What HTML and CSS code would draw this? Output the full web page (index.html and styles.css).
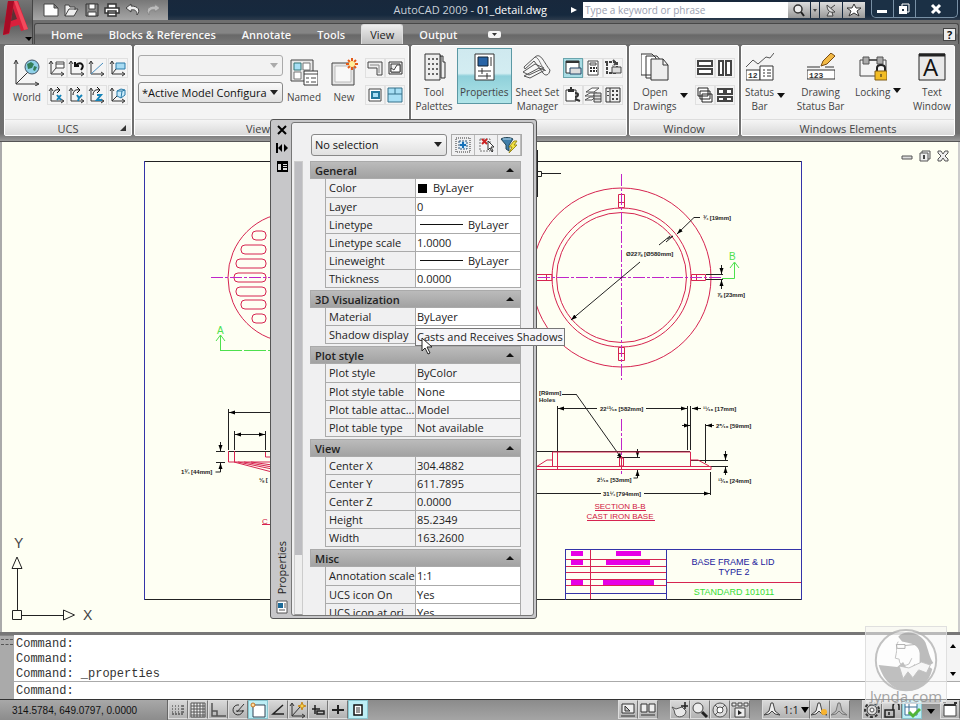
FILE: index.html
```html
<!DOCTYPE html>
<html lang="en">
<head>
<meta charset="utf-8">
<title>AutoCAD 2009 - 01_detail.dwg</title>
<link rel="stylesheet" href="styles.css">
</head>
<body>
<svg class="defs" width="0" height="0" aria-hidden="true">
  <defs>
    <symbol id="axes" viewBox="0 0 18 18"><path d="M3 3v12h12M1 5l2-3 2 3M13 13l3 2-3 2" fill="none" stroke="#333"/></symbol>
    <marker id="arrow" viewBox="0 0 6 6" refX="6" refY="3" markerWidth="6" markerHeight="6" orient="auto-start-reverse" markerUnits="userSpaceOnUse"><path d="M0 1l6 2-6 2z"/></marker>
  </defs>
</svg>

<header class="top">
  <button class="app-button" aria-label="Application menu">
    <svg viewBox="0 0 33 43"><path d="M8 0h10l10 28-7 2-2-6-8 2-2 7-6 1z" fill="#d9203c"/><path d="M8 0h6L9 32l-6 2z" fill="#a60c25"/><path d="M13 7l4 11-6 2z" fill="#5d3034"/><path d="M17 0l11 28-4 1L14 0z" fill="#f24a5c"/><path d="M25 36h7l-3 4z" fill="#000"/></svg>
  </button>
  <div class="titlebar">
    <div class="quick">
      <button aria-label="New"><svg viewBox="0 0 16 14"><path d="M1 1h10l4 4v8H1zM11 1v4h4" fill="#fff" stroke="#444"/></svg></button>
      <button aria-label="Open"><svg viewBox="0 0 16 14"><path d="M2 13V2h4l1 2h5v3M2 13l4-7h9l-4 7z" fill="#eee" stroke="#444"/></svg></button>
      <button aria-label="Save"><svg viewBox="0 0 16 14"><path d="M2 1h12v12H2z" fill="#888" stroke="#333"/><path d="M5 1h6v5H5zM4 9h8v4H4z" fill="#fff" stroke="#444"/></svg></button>
      <button aria-label="Print"><svg viewBox="0 0 16 14"><path d="M4 1h8v4H4zM1 5h14v5H1zM4 8h8v5H4z" fill="#fff" stroke="#333" stroke-width="1.5"/></svg></button>
      <button aria-label="Undo"><svg viewBox="0 0 16 14"><path d="M6 1L1 5l5 4V7c4-1 6 1 6 5 4-5 1-9-6-9z" fill="#eee" stroke="#444"/></svg></button>
      <button aria-label="Redo"><svg viewBox="0 0 16 14"><path d="M10 1l5 4-5 4V7c-4-1-6 1-6 5-4-5-1-9 6-9z" fill="#bbb" stroke="#888"/></svg></button>
    </div>
    <h1 class="title">AutoCAD 2009 - <span>01_detail.dwg</span></h1>
    <svg class="title-arrow" viewBox="0 0 6 8"><path d="M0 1l6 3-6 3z" fill="#fff"/></svg>
    <input class="search" type="search" aria-label="Search help" placeholder="Type a keyword or phrase">
    <div class="info">
      <button aria-label="Search"><svg viewBox="0 0 16 14"><circle cx="7" cy="6" r="4" fill="#eee" stroke="#333" stroke-width="1.5"/><path d="M10 9l3 4" stroke="#222" stroke-width="2"/></svg></button>
      <button class="slim" aria-label="Search options"><svg viewBox="0 0 6 14"><path d="M1 6h4l-2 3z" fill="#444"/></svg></button>
      <button aria-label="Communication center"><svg viewBox="0 0 16 14"><path d="M4 2c0 6 3 8 8 7zM6 9l-2 4h6L9 9M8 5l4-3" fill="#ddd" stroke="#444"/></svg></button>
      <button aria-label="Favorites"><svg viewBox="0 0 16 14"><path d="M8 1l2 4h5l-4 3 2 5-5-3-5 3 2-5-4-3h5z" fill="#fff" stroke="#333"/></svg></button>
    </div>
    <div class="window-controls">
      <button aria-label="Minimize"><svg viewBox="0 0 14 12"><path d="M2 7h10v3H2z" fill="#fff"/></svg></button>
      <button aria-label="Restore"><svg viewBox="0 0 14 12"><path d="M5 1h7v8H5z" fill="none" stroke="#fff"/><path d="M2 3h8v8H2z" fill="#fff"/><path d="M5 6h2v2H5z" fill="#234"/></svg></button>
      <button class="wide" aria-label="Close"><svg viewBox="0 0 14 12"><path d="M3 2l8 8M11 2l-8 8" stroke="#fff" stroke-width="3"/></svg></button>
    </div>
  </div>
  <nav class="tabs">
    <a href="#home">Home</a><a href="#blocks">Blocks &amp; References</a><a href="#annotate">Annotate</a><a href="#tools">Tools</a><a class="active" href="#view">View</a><a href="#output">Output</a>
    <button class="collapse" aria-label="Minimize ribbon"><svg viewBox="0 0 13 7"><rect width="13" height="7" rx="2" fill="#f4f4f4"/><path d="M4 2h5L6.500 5z" fill="#333"/></svg></button>
    <button class="help" aria-label="Help">?</button>
  </nav>
</header>

<main class="ribbon">
  <section class="panel ucs">
    <div class="tools">
      <button class="big low"><svg viewBox="0 0 28 28"><path d="M3 3v23h22M1 6l2-4 2 4M22 24l4 2-4 2M3 26L16 13" fill="none" stroke="#333"/><circle cx="19" cy="9" r="7" fill="#8fd0e8" stroke="#456"/><path d="M14 6l4-2 3 2-2 4-4 1zM21 8l3 1-2 4-2-1z" fill="#337f58"/></svg>World</button>
      <div class="grid three">
        <button aria-label="Named UCS"><svg viewBox="0 0 18 18"><use href="#axes"/><path d="M8 3h8v6H8zM8 5h8" fill="#fff" stroke="#444"/><path d="M3 15l5-6" stroke="#444"/></svg></button>
        <button aria-label="UCS previous"><svg viewBox="0 0 18 18"><use href="#axes"/><path class="heavy" d="M8 6c5-4 9 0 5 5M7 3v4h4" fill="none" stroke="#111"/></svg></button>
        <button aria-label="UCS origin"><svg viewBox="0 0 18 18"><use href="#axes"/><path d="M3 15L15 4" stroke="#4a8fc0"/></svg></button>
        <button aria-label="UCS X"><svg viewBox="0 0 18 18"><use href="#axes"/><path d="M5 9c0-4 3-6 6-5M9 1l3 3-3 3" fill="none" stroke="#111"/><path class="heavy" d="M9 9l4 5M13 9l-4 5" stroke="#1684b8"/></svg></button>
        <button aria-label="UCS Y"><svg viewBox="0 0 18 18"><use href="#axes"/><path d="M5 9c0-4 3-6 6-5M9 1l3 3-3 3" fill="none" stroke="#111"/><path class="heavy" d="M9 9l2 3 3-3M11 12l-1 3" fill="none" stroke="#1684b8"/></svg></button>
        <button aria-label="UCS Z"><svg viewBox="0 0 18 18"><use href="#axes"/><path d="M5 9c0-4 3-6 6-5M9 1l3 3-3 3" fill="none" stroke="#111"/><path class="heavy" d="M9 9h4l-4 5h5" fill="none" stroke="#1684b8"/></svg></button>
      </div>
      <div class="grid one">
        <button aria-label="View UCS"><svg viewBox="0 0 18 18"><use href="#axes"/><path d="M7 4h9v6H7z" fill="#a8dcf3" stroke="#2b7ba8"/><path d="M3 15l4-5" stroke="#333"/></svg></button>
        <button aria-label="Object UCS"><svg viewBox="0 0 18 18"><use href="#axes"/><path d="M8 5l4-2 4 1v5l-4 3-4-2zM8 5h5l3-1M13 5l-1 7" fill="#c8eafa" stroke="#2b7ba8"/><path d="M3 15l5-5" stroke="#333"/></svg></button>
      </div>
    </div>
    <h2>UCS<svg class="corner" viewBox="0 0 6 6"><path d="M6 0v6H0z" fill="#333"/></svg></h2>
  </section>
  <section class="panel view">
    <div class="tools">
      <div class="stack">
        <span class="combo disabled"><select aria-label="Named view" disabled><option></option></select></span>
        <span class="combo"><select aria-label="Viewport configuration"><option>*Active Model Configura</option></select></span>
      </div>
      <button class="big low"><svg viewBox="0 0 28 28"><path d="M1 2h22v21H1z" fill="#e8e8e8" stroke="#444"/><path d="M4 5h7v7H4z" fill="#a7dff5" stroke="#377"/><path d="M13 5h7v7h-7zM4 14h7v7H4z" fill="#fff" stroke="#777"/><path d="M14 13h14v14H14z" fill="#fff" stroke="#333"/><path d="M14 16h14M16 20h3M21 20h5M16 24h3M21 24h5" stroke="#444"/></svg>Named</button>
      <button class="big low"><svg viewBox="0 0 28 28"><path d="M2 5h22v22H2z" fill="#e6e6e6" stroke="#444"/><path d="M5 8h16v16H5z" fill="#f8f8f8" stroke="#bbb"/><path d="M22 0v12M16 6h12M18 2l8 8M26 2l-8 8" stroke="#e45a16" stroke-width="2"/><circle cx="22" cy="6" r="3" fill="#ffef99"/></svg>New</button>
      <div class="grid two">
        <button aria-label="Polygonal viewport"><svg viewBox="0 0 18 18"><path d="M2 3h14v13h-5V9H2z" fill="#eee" stroke="#444"/><path d="M4 6h9v8" fill="none" stroke="#888"/></svg></button>
        <button aria-label="Clip viewport"><svg viewBox="0 0 18 18"><path d="M3 3h13v12H3zM5 5h9v8H5z" fill="#eee" stroke="#333"/><path d="M5 13V9l3 2 3-5h3v7z" fill="#fff" stroke="#444"/></svg></button>
        <button aria-label="Viewport object"><svg viewBox="0 0 18 18"><path d="M3 3h12v12H3z" fill="#fff" stroke="#444"/><path class="heavy" d="M6 6h7v6H6z" fill="#a7dff5" stroke="#247a9d"/></svg></button>
        <button aria-label="Join viewports"><svg viewBox="0 0 18 18"><path d="M2 2h14v14H2zM9 2v6M2 8h14" fill="#a7dff5" stroke="#35708a"/></svg></button>
      </div>
    </div>
    <h2>Viewports</h2>
  </section>
  <section class="panel palettes">
    <div class="tools">
      <button class="big"><svg viewBox="0 0 28 28"><path d="M20 3h3v6h2v16h-4V3zM5 1h15v26H5z" fill="#eee" stroke="#333"/><path d="M8 5h2v2H8zm4 0h2v2h-2zm4 0h2v2h-2zM8 10h2v2H8zm4 0h2v2h-2zm4 0h2v2h-2zM8 15h2v2H8zm4 0h2v2h-2zm4 0h2v2h-2zM8 20h2v2H8zm4 0h2v2h-2zm4 0h2v2h-2z" fill="#666"/></svg>Tool<br>Palettes</button>
      <button class="big selected"><svg viewBox="0 0 28 28"><path d="M5 1h19v26H5z" fill="#fff" stroke="#333"/><path d="M8 4h10v9H8z" fill="#2864a6" stroke="#123"/><path d="M21 4v9M8 18h13M12 15v6M8 23h13M17 20v6" stroke="#333"/></svg>Properties</button>
      <button class="big"><svg viewBox="0 0 28 28"><path d="M1 23l15-8 6 2-15 8zM0 19l12-8 9 4-15 7zM1 14L12 4c6-5 9 6 15 13-1 6-5 6-7 3l-9-12L2 16z" fill="#f7f7f7" stroke="#555"/><path d="M12 4c5 1 5 9 11 14" fill="none" stroke="#777"/></svg>Sheet Set<br>Manager</button>
      <div class="grid three">
        <button class="lit" aria-label="Command line"><svg viewBox="0 0 18 18"><path d="M2 2h13v12H2z" fill="#fff" stroke="#333"/><path class="heavy" d="M2 3h13" stroke="#333"/><path d="M6 9h11v6H6z" fill="#ddd" stroke="#246"/></svg></button>
        <button aria-label="Calculator"><svg viewBox="0 0 18 18"><path d="M4 2h10v14H4zM6 4h6v2H6z" fill="#fff" stroke="#444"/><path class="heavy" d="M6 9h2m1 0h2m1 0h1M6 12h2m1 0h2m1 0h1" stroke="#333"/></svg></button>
        <button aria-label="Design center"><svg viewBox="0 0 18 18"><path class="heavy" d="M1 3h12v11H3V4M9 1l3 3-3 3" fill="none" stroke="#444" stroke-dasharray="3 1"/><path d="M8 8h9v6H8z" fill="#ddd" stroke="#444"/></svg></button>
        <button aria-label="Markup manager"><svg viewBox="0 0 18 18"><path d="M2 4h10v11H2z" fill="#fff" stroke="#333"/><path class="heavy" d="M7 1v4M11 7c5 0 3 4 0 4M11 13l5 2" fill="none" stroke="#333"/><path d="M4 3h6v3H4z" fill="#333"/></svg></button>
        <button aria-label="Database"><svg viewBox="0 0 18 18"><path d="M2 6l6-4h7l-5 4zM1 10l5-3h7l-4 3zM1 14l5-3h5l-3 3z" fill="#fff" stroke="#555"/><path d="M10 7h7v9h-7zM10 10h7M10 13h7" fill="#ddd" stroke="#444"/></svg></button>
        <button aria-label="External references"><svg viewBox="0 0 18 18"><path d="M2 2h14v14H2zM6 2v14" fill="#eee" stroke="#333"/><path d="M8 4h2v2H8zm4 0h2v2h-2zM8 8h2v2H8zm4 0h2v2h-2zM8 12h2v2H8zm4 0h2v2h-2zM3 5h2v1H3zm0 4h2v1H3z" fill="#444"/></svg></button>
      </div>
    </div>
    <h2>Palettes</h2>
  </section>
  <section class="panel window">
    <div class="tools">
      <button class="big drop"><svg viewBox="0 0 28 28"><path d="M0 1h11l4 4v17H0zM5 3h11l4 5v17H5z" fill="#fff" stroke="#333"/><path d="M10 6h12l5 6v15H10zM22 6v6h5" fill="#eee" stroke="#333"/></svg>Open<br>Drawings</button>
      <div class="grid two">
        <button aria-label="Tile horizontally"><svg viewBox="0 0 18 18"><path class="heavy" d="M2 2h14v5H2zM2 10h14v5H2z" fill="#fff" stroke="#444"/></svg></button>
        <button aria-label="Tile vertically"><svg viewBox="0 0 18 18"><path class="heavy" d="M3 2h4v14H3zM10 2h5v14h-5z" fill="#fff" stroke="#444"/></svg></button>
        <button aria-label="Cascade"><svg viewBox="0 0 18 18"><path d="M2 2h10v8H2zM4 5h10v8H4zM6 8h10v8H6z" fill="#fff" stroke="#222"/></svg></button>
        <button aria-label="Arrange icons"><svg viewBox="0 0 18 18"><path class="heavy" d="M2 3h6v5H2zM10 3h6v5h-6zM2 11h6v4H2zM10 11h6v4h-6z" fill="#fff" stroke="#444"/></svg></button>
      </div>
    </div>
    <h2>Window</h2>
  </section>
  <section class="panel elements">
    <div class="tools">
      <button class="big drop"><svg viewBox="0 0 28 28"><path d="M0 14l7-7 5 4 8-7 4 1 4-5" fill="none" stroke="#555"/><path d="M0 17h14v10H0z" fill="#fff" stroke="#333"/><text class="tiny" x="2" y="25">12</text><path d="M14 13h13v14H14z" fill="#fff" stroke="#333"/><path d="M17 17h2m2 0h4m-8 3h2m2 0h4m-8 3h2m2 0h4" stroke="#333"/></svg>Status<br>Bar</button>
      <button class="big"><svg viewBox="0 0 28 28"><path d="M0 14h13M18 14h9" stroke="#333"/><path d="M0 17h28v9H0z" fill="#fff" stroke="#333"/><text class="tiny" x="2" y="25">123</text><path d="M14 13l2-5 8-8 4 3-8 8z" fill="#f2b945" stroke="#774b13"/></svg>Drawing<br>Status Bar</button>
      <button class="big drop side"><svg viewBox="0 0 28 28"><path d="M1 7h26v16H1z" fill="#f4f4f4" stroke="#444"/><path d="M4 4h6v7H4zM18 4h6v7h-6z" fill="#aaa" stroke="#555"/><path d="M10 7h8" stroke="#222"/><path d="M18 18v-3c0-4 8-4 8 0v3" fill="none" stroke="#222" stroke-width="2"/><path d="M16 18h12v9H16z" fill="#f2bd25" stroke="#805d16"/><path d="M22 21v3" stroke="#222"/></svg>Locking</button>
      <button class="big"><svg viewBox="0 0 28 28"><path d="M1 1h26v26H1z" fill="#e9e9e9" stroke="#222"/><path d="M1 2h26" stroke="#222" stroke-width="3"/><text class="letter" x="5" y="23">A</text></svg>Text<br>Window</button>
    </div>
    <h2>Windows Elements</h2>
  </section>
</main>

<section class="canvas" aria-label="Drawing">
  <svg class="drawing" viewBox="2 142 956 490" preserveAspectRatio="xMidYMid meet">
    <g class="ink crisp"><path d="M145 161.500H801M145 599.500H801"/><path class="blue" d="M144.500 161V600M801.500 161V600"/></g>
    <!-- lid, plan -->
    <g class="red"><circle cx="293" cy="277.500" r="65"/>
      <rect x="252" y="231" width="14" height="9" rx="4"/><rect x="241" y="245" width="25" height="9" rx="4"/><rect x="236" y="259" width="30" height="9" rx="4"/><rect x="234" y="273" width="32" height="9" rx="4"/><rect x="236" y="287" width="30" height="9" rx="4"/><rect x="241" y="300" width="25" height="9" rx="4"/><rect x="252" y="314" width="14" height="9" rx="4"/></g>
    <path class="center" d="M211 277.500H272"/>
    <g class="green"><path d="M220.500 351V335M216 341l4.500-6 4.500 6M220 350.500H272" stroke-dasharray="22 2"/><text x="217" y="334">A</text></g>
    <!-- lid, section -->
    <g class="ink"><path d="M228.500 409V450M234.500 431V450M265.500 431V450M228 451.500H272M216 451.500h9M216 462.500h9M220.500 462v10h-5"/><path d="M272 412.500H229" marker-end="url(#arrow)"/><path d="M235 434.500H265" marker-start="url(#arrow)" marker-end="url(#arrow)"/><path d="M220.500 442V451" marker-end="url(#arrow)"/><path d="M220.500 471V463" marker-end="url(#arrow)"/></g>
    <g class="red"><path d="M228.500 451v11H272M234.500 451v11M265.500 452v5h6M234 462l38 10M238 462l34 7M244 462l28 5M251 462l21 3"/></g>
    <text class="dim" x="181" y="474">1¾ [44mm]</text><text class="dim" x="259" y="482">⅛ [</text>
    <text class="caption" x="262" y="524">C</text><path class="red" d="M262 524.500h10"/>
    <!-- base, plan -->
    <g class="red"><circle cx="621.500" cy="277.500" r="89.500"/><circle cx="621.500" cy="277.500" r="69.500"/><circle cx="621.500" cy="277.500" r="65"/>
      <path d="M618.500 194.500h6v13h-6zM618.500 347.500h6v13h-6zM536 274.500h16v6h-16zM691.500 274.500h14v6h-14zM546.500 274v6M696.500 274v6M618 202.500h7M618 353.500h7"/></g>
    <path class="center" d="M621.500 174V380M621.500 419V474M538 277.500H722"/>
    <g class="ink"><path d="M537.500 150V197M538 171.500h3.500v5H538M541 173.500H561M706 274.500H723M706 279.500H723M659 245l11-9M667 239l6-3M666 242l7-6"/><path d="M700 217.500h-6L677 234" marker-end="url(#arrow)"/><path d="M640 262L571 320" marker-end="url(#arrow)"/><path d="M721.500 265V274" marker-end="url(#arrow)"/><path d="M721.500 289V280" marker-end="url(#arrow)"/></g>
    <g class="green"><path d="M722 278.500H734.500V263M730 268l4.500-6 4.500 6"/><text x="729" y="260">B</text></g>
    <text class="dim" x="703" y="220">¾ [19mm]</text><text class="dim" x="626" y="256">Ø22⅞ [Ø580mm]</text><text class="dim" x="717" y="297">⅞ [23mm]</text>
    <!-- base, section -->
    <g class="ink"><path d="M557.500 406V451M687.500 406V450M690.500 406V450M536 451.500H690M705.500 424V463M617 457.500H640M624 469.500H640M691 460.500H728M698 466.500H728M710.500 472V495M637.500 478h-4M562 394.500H576"/>
      <path d="M576 394L622 459" marker-end="url(#arrow)"/><path d="M597 408.500H558" marker-end="url(#arrow)"/><path d="M646 408.500H687" marker-end="url(#arrow)"/><path d="M701 408.500H692" marker-end="url(#arrow)"/><path d="M682 425.500H690" marker-end="url(#arrow)"/><path d="M714 425.500H706" marker-end="url(#arrow)"/><path d="M536 493.500H601"/><path d="M644 493.500H710" marker-end="url(#arrow)"/><path d="M637.500 449V457" marker-end="url(#arrow)"/><path d="M637.500 478V470" marker-end="url(#arrow)"/><path d="M725.500 451V460" marker-end="url(#arrow)"/><path d="M725.500 475V467" marker-end="url(#arrow)"/></g>
    <g class="red"><path d="M552.500 466V452H690.500V466M557.500 452v17M536 466.500H711v3H536M536 467l11-7h5M691 460h7l11 6M619.500 466v-8h4v8zM621.500 456v13"/></g>
    <g class="dim"><text x="539" y="395">[R9mm]</text><text x="539" y="402">Holes</text><text x="600" y="411">22¹³⁄₁₆ [582mm]</text><text x="703" y="411">¹¹⁄₁₆ [17mm]</text><text x="716" y="428">2⁵⁄₁₆ [59mm]</text><text x="597" y="482">2¹⁄₁₆ [53mm]</text><text x="718" y="483">¹³⁄₁₆ [24mm]</text><text x="603" y="496">31¼ [794mm]</text></g>
    <text class="caption" x="620" y="509" text-anchor="middle">SECTION B-B</text><text class="caption" x="620" y="519" text-anchor="middle">CAST IRON BASE</text>
    <path class="red crisp" d="M595 510.500H646M587 520.500H655"/>
    <!-- title block -->
    <path class="blue crisp" d="M565.500 600V549.500H801M666.500 549V600M565 593.500H666"/>
    <path class="red crisp" d="M590.500 550V599M566 559.500H666M566 566.500H666M566 572.500H666M566 579.500H666M566 585.500H666M667 582.500H801"/>
    <path class="mag" d="M571 551h12v5h-12zM616 551h25v5h-25zM571 560h12v5h-12zM606 560h44v5h-44zM571 580h12v5h-12zM603 580h51v5h-51z"/>
    <g class="plate"><text x="733" y="565">BASE FRAME &amp; LID</text><text x="734" y="575">TYPE 2</text><text class="std" x="734" y="595">STANDARD 101011</text></g>
    <!-- coordinate icon -->
    <g class="ink"><path d="M12.500 610.500h9v9h-9zM17.500 610V568M12 568.500h10L17 557zM22 615.500H63M63.500 610v10l11-5z"/></g>
    <text class="axis" x="14" y="548">Y</text><text class="axis" x="83" y="620">X</text>
  </svg>
  <div class="doc-controls">
    <button aria-label="Minimize drawing"><svg viewBox="0 0 12 12"><path d="M1 6h10v3H1z" fill="#ddd" stroke="#555"/></svg></button>
    <button aria-label="Restore drawing"><svg viewBox="0 0 12 12"><path d="M3 3V1h8v8H9M1 3h8v8H1z" fill="#eee" stroke="#555"/><path d="M4 5h2v4H4z" fill="#444"/></svg></button>
    <button aria-label="Close drawing"><svg viewBox="0 0 12 12"><path d="M1 1h3l2 3 2-3h3v2L8 6l3 3v2H8L6 8l-2 3H1V9l3-3-3-3z" fill="#eee" stroke="#555"/></svg></button>
  </div>
</section>

<section class="command">
  <div class="grip"></div>
  <div class="history"><p>Command:</p><p>Command:</p><p>Command: _properties</p></div>
  <div class="vscroll"><svg viewBox="0 0 6 4"><path d="M0 4l3-4 3 4z"/></svg><svg viewBox="0 0 6 4"><path d="M0 0h6L3 4z"/></svg></div>
  <label class="prompt">Command: <input type="text" aria-label="Command line"></label>
</section>

<footer class="status">
  <output class="coords">314.5784, 649.0797, 0.0000</output>
  <div class="group">
    <button aria-label="Snap"><svg viewBox="0 0 18 18"><path d="M3 5h10M3 8h10M3 11h10" stroke="#333" stroke-dasharray="1 2"/><path d="M14 4v9H3" fill="none" stroke="#222" stroke-dasharray="2 1"/></svg></button>
    <button aria-label="Grid"><svg viewBox="0 0 18 18"><path d="M2 2h14v14H2zM5 2v14M8 2v14M11 2v14M14 2v14M2 5h14M2 8h14M2 11h14M2 14h14" fill="#eee" stroke="#555"/></svg></button>
    <button aria-label="Ortho"><svg viewBox="0 0 18 18"><path d="M3 2v13h14M3 10h5v5" fill="none" stroke="#555" stroke-width="1.500"/></svg></button>
    <button aria-label="Polar"><svg viewBox="0 0 18 18"><path d="M14 9a5 5 0 1 1-4-5M8 11l7-8M7 10h8" fill="none" stroke="#333"/></svg></button>
    <button class="on" aria-label="Object snap"><svg viewBox="0 0 18 18"><path d="M4 4h12v12H4z" fill="#fff" stroke="#345"/><circle cx="4" cy="4" r="2" fill="#ffdda0" stroke="#c87724"/></svg></button>
    <button aria-label="Object tracking"><svg viewBox="0 0 18 18"><path d="M14 4L4 13h11" fill="none" stroke="#222" stroke-width="1.500"/></svg></button>
    <button aria-label="Dynamic UCS"><svg viewBox="0 0 18 18"><use href="#axes"/><path d="M3 15l8-9" stroke="#333"/><path d="M13 1l1 3 3 1-3 1-1 3-1-3-3-1 3-1z" fill="#f7d449" stroke="#c78a20"/></svg></button>
    <button aria-label="Dynamic input"><svg viewBox="0 0 18 18"><path d="M3 8h8M6 4v9M8 10h7v3H8z" fill="none" stroke="#222" stroke-width="1.500"/></svg></button>
    <button aria-label="Lineweight"><svg viewBox="0 0 18 18"><path d="M3 9h12M9 4v9" stroke="#222" stroke-width="2"/></svg></button>
    <button class="on" aria-label="Quick properties"><svg viewBox="0 0 18 18"><path d="M5 4h8v10H5z" fill="#fff" stroke="#111" stroke-width="1.500"/><path d="M7 7h4M7 9h4M7 11h4" stroke="#333"/></svg></button>
  </div>
  <div class="spacer"></div>
  <div class="group">
    <button aria-label="Model"><svg viewBox="0 0 18 18"><path d="M3 3h12v9H3zM2 15h14M6 5v5h5z" fill="#eee" stroke="#333"/></svg></button>
    <button aria-label="Layout"><svg viewBox="0 0 18 18"><path d="M2 3h6v8H2zM10 3h6v8h-6zM2 14h14" fill="#eee" stroke="#333"/></svg></button>
  </div>
  <div class="group">
    <button aria-label="Pan"><svg viewBox="0 0 18 18"><path d="M3 9l-2-3 4 2 6-2 4 4c0 6-9 8-11 3z" fill="#e8e8e8" stroke="#555"/><path d="M14 1v7M10 5h7" stroke="#222" stroke-width="1.500"/></svg></button>
    <button aria-label="Zoom"><svg viewBox="0 0 18 18"><circle cx="7" cy="7" r="5" fill="#eee" stroke="#444"/><path d="M11 11l5 5" stroke="#222" stroke-width="3"/></svg></button>
    <button aria-label="Steering wheel"><svg viewBox="0 0 18 18"><circle cx="9" cy="9" r="7" fill="#ddd" stroke="#555"/><circle cx="9" cy="9" r="3" fill="#fff" stroke="#555"/><path d="M4 4l3 3M14 4l-3 3M4 14l3-3" stroke="#555"/></svg></button>
    <button aria-label="Show motion"><svg viewBox="0 0 18 18"><path d="M1 2h4v3H1zM7 2h4v3H7zM13 2h4v3h-4zM4 7h10v9H4z" fill="#eee" stroke="#444"/><path d="M7 9v5l4-2z" fill="#222"/></svg></button>
  </div>
  <div class="group">
    <button class="scale"><svg viewBox="0 0 18 18"><path d="M8 2h2l2 8 5 4-5-1-3-3-3 3-5 1 5-4z" fill="#eee" stroke="#444"/></svg>1:1<svg class="tri" viewBox="0 0 8 6"><path d="M0 0h8L4 6z"/></svg></button>
    <button aria-label="Annotation visibility"><svg viewBox="0 0 18 18"><path d="M7 2h2l2 8 5 4-5-1-3-3-3 3-5 1 5-4z" fill="#eee" stroke="#444"/><circle cx="13" cy="11" r="3" fill="#f7b32e"/></svg></button>
    <button aria-label="Auto scale"><svg viewBox="0 0 18 18"><path d="M7 2h2l2 8 5 4-5-1-3-3-3 3-5 1 5-4z" fill="#bbb" stroke="#777"/></svg></button>
  </div>
  <div class="group last">
    <button aria-label="Workspace"><svg viewBox="0 0 18 18"><circle cx="9" cy="9" r="7" fill="none" stroke="#333" stroke-width="2" stroke-dasharray="3 2"/><circle cx="9" cy="9" r="5" fill="#ddd" stroke="#333"/><circle cx="9" cy="9" r="2" fill="#fff" stroke="#555"/></svg></button>
    <button aria-label="Lock toolbars"><svg viewBox="0 0 18 18"><path d="M2 9h9v7H2zM10 9V5c0-4 6-4 6 0v4M6 11v3" fill="none" stroke="#222" stroke-width="1.500"/></svg></button>
    <button class="on" aria-label="Drawing status"><svg viewBox="0 0 18 18"><path d="M2 2h12v12H2zM2 6h12M6 2v12" fill="#fff" stroke="#3b6f94"/><path d="M6 11l4 4 7-7" fill="none" stroke="#51b536" stroke-width="3"/></svg></button>
    <button class="plain" aria-label="Status menu"><svg viewBox="0 0 18 18"><path d="M5 8h8l-4 5z"/></svg></button>
    <button aria-label="Clean screen"><svg viewBox="0 0 18 18"><path d="M3 4h12v11H3z" fill="#fff" stroke="#444"/><path d="M3 4h12M2 2h3M13 2h3" stroke="#333" stroke-width="2"/></svg></button>
  </div>
</footer>

<aside class="palette" aria-label="Properties palette">
  <div class="rail">
    <button aria-label="Close palette"><svg viewBox="0 0 12 12"><path d="M2 2l8 8M10 2l-8 8" stroke="#000" stroke-width="2"/></svg></button>
    <button aria-label="Auto-hide"><svg viewBox="0 0 12 12"><path d="M1 1v10" stroke="#000" stroke-width="2"/><path d="M2 6l4-4v8zM12 6L8 2v8z"/></svg></button>
    <button aria-label="Palette menu"><svg viewBox="0 0 12 12"><path d="M1 1h11v11H1z"/><path d="M2 4h3v6H2zM7 4h4v1H7zM7 6h4v1H7zM7 8h4v2H7z" fill="#ddd"/></svg></button>
    <span class="name">Properties</span>
    <svg class="mini" viewBox="0 0 12 14"><path d="M1 1h10v12H1z" fill="#fff" stroke="#555"/><path d="M2 3h5v5H2z" fill="#1c6a97"/><path d="M9 3v5M3 10h6" stroke="#555"/></svg>
  </div>
  <div class="sheet">
    <div class="chooser">
      <span class="combo"><select aria-label="Object type"><option>No selection</option></select></span>
      <div class="pick">
        <button aria-label="Toggle pickadd"><svg viewBox="0 0 18 18"><path d="M2 2h14v14H2z" fill="none" stroke="#333" stroke-dasharray="1 1"/><path d="M5 5h8v8H5z" fill="#d9ecfa" stroke="#357" stroke-dasharray="2 1"/><path d="M9 6v6M6 9h6" stroke="#1770b8" stroke-width="2"/></svg></button>
        <button aria-label="Select objects"><svg viewBox="0 0 18 18"><path d="M3 3h10v12H3z" fill="#f4f4f4" stroke="#777" stroke-dasharray="2 1"/><path d="M5 3l5 5M10 3L5 8" stroke="#c22" stroke-width="2"/><path d="M11 5v9l2-2 2 4 1-1-2-4h3z" fill="#fff" stroke="#333"/></svg></button>
        <button aria-label="Quick select"><svg viewBox="0 0 18 18"><path d="M1 3c3-2 9-2 12 0L9 9v6l-3-2V9z" fill="#3f7eaa" stroke="#245"/><path d="M3 3h8" stroke="#bde"/><path d="M14 5l-5 6h3l-3 6 8-8h-3l3-4z" fill="#f3e343" stroke="#9b8b16"/></svg></button>
      </div>
    </div>
    <div class="scroller">
      <div class="bar"></div>
      <div class="groups">
        <section><h3>General</h3><table>
          <tr><th>Color</th><td><i class="swatch"></i>ByLayer</td></tr>
          <tr><th>Layer</th><td>0</td></tr>
          <tr><th>Linetype</th><td><i class="rule"></i>ByLayer</td></tr>
          <tr><th><label for="lts">Linetype scale</label></th><td><input id="lts" value="1.0000"></td></tr>
          <tr><th>Lineweight</th><td><i class="rule"></i>ByLayer</td></tr>
          <tr><th><label for="thk">Thickness</label></th><td><input id="thk" value="0.0000"></td></tr></table></section>
        <section><h3>3D Visualization</h3><table>
          <tr><th>Material</th><td>ByLayer</td></tr>
          <tr><th>Shadow display</th><td></td></tr></table></section>
        <section><h3>Plot style</h3><table>
          <tr><th>Plot style</th><td class="ro">ByColor</td></tr>
          <tr><th>Plot style table</th><td>None</td></tr>
          <tr><th>Plot table attac...</th><td class="ro">Model</td></tr>
          <tr><th>Plot table type</th><td class="ro">Not available</td></tr></table></section>
        <section><h3>View</h3><table>
          <tr><th>Center X</th><td class="ro">304.4882</td></tr>
          <tr><th>Center Y</th><td class="ro">611.7895</td></tr>
          <tr><th>Center Z</th><td class="ro">0.0000</td></tr>
          <tr><th>Height</th><td class="ro">85.2349</td></tr>
          <tr><th>Width</th><td class="ro">163.2600</td></tr></table></section>
        <section><h3>Misc</h3><table>
          <tr><th>Annotation scale</th><td>1:1</td></tr>
          <tr><th>UCS icon On</th><td>Yes</td></tr>
          <tr><th>UCS icon at ori...</th><td>Yes</td></tr></table></section>
      </div>
    </div>
  </div>
  <span class="tip" role="tooltip">Casts and Receives Shadows</span>
  <svg class="cursor" viewBox="0 0 12 18"><path d="M1 1v13l3-3 3 6 2-1-3-6h5z" fill="#fff" stroke="#222"/></svg>
</aside>

<div class="watermark">
  <svg viewBox="0 0 82 78"><circle cx="41" cy="34" r="31" fill="#fff" fill-opacity=".6" stroke="#bbb" stroke-width="2"/><path d="M33 10c8-9 24-3 28 6 3 8 4 15 8 21l-14 9V27c-1-9-8-10-18-12z" fill="#b5b5b5"/><path d="M33 15c-3 5-1 8-2 12l-1 5 4 1c0 6 4 8 10 5l3-6" fill="none" stroke="#bbb"/><path d="M31 18h9v4h-8zM40 19l10-1" fill="none" stroke="#aaa"/><path d="M13 39l19 2 6-5 5 9 7-7 4 7 8-6 6 4c-7 30-45 31-55-4z" fill="#b9b9b9"/><path d="M34 40l4 13 5-7 5 6 6-8 8 3 4-8-9-3-13 6z" fill="#f7f7f7" stroke="#bbb"/></svg>
  <span>lynda.com</span>
</div>
</body>
</html>
```
FILE: styles.css
```css
* { box-sizing: border-box; }
html, body { height: 100%; }
body {
  margin: 0;
  display: flex;
  flex-direction: column;
  position: relative;
  overflow: hidden;
  background: #777;
  color: #222;
  font: 11px/14px "Open Sans", "Noto Sans", sans-serif;
}
button, input, select { font: inherit; color: inherit; margin: 0; padding: 0; border: 0; background: none; }
button { display: flex; align-items: center; justify-content: center; }
h1, h2, h3, p { margin: 0; font-weight: normal; font-size: inherit; }
svg { display: block; flex: none; }
.defs { position: absolute; }

/* Title bar and tabs */
.top { display: grid; grid-template-columns: 33px 1fr; grid-template-rows: 20px 24px; background: #6f6f6f; flex: none; }
.app-button { grid-row: 1 / 3; background: linear-gradient(#747474, #5a5a5a 50%, #858585); border-right: 1px solid #444; }
.app-button svg { width: 33px; height: 43px; }
.titlebar { display: flex; align-items: stretch; background: linear-gradient(#18283c, #16293e 75%, #2c3b4c); padding-right: 2px; }
.quick { display: flex; align-items: center; justify-content: space-between; width: 135px; padding: 0 7px 0 10px; background: linear-gradient(#777, #a6a6a6); }
.quick svg { width: 16px; height: 14px; }
.title { flex: 1; text-align: right; color: #c8d0d8; line-height: 20px; white-space: nowrap; }
.title span { color: #fff; }
.title-arrow { width: 6px; height: 8px; margin: 6px 6px 0 24px; }
.search { width: 205px; height: 16px; margin-top: 2px; padding: 0 2px; background: #fff; border-radius: 0; appearance: none; font-size: 10px; }
.search::placeholder { color: #9aa0b0; opacity: 1; }
.info { display: flex; gap: 1px; margin: 2px 6px 2px 0; }
.info button { width: 22px; background: linear-gradient(#ddd, #999); }
.info .slim { width: 8px; }
.info svg { height: 14px; }
.window-controls { display: flex; height: 18px; width: 87px; border: 1px solid #7890a5; border-top: 0; border-radius: 0 0 5px 5px; background: #1b3045; }
.window-controls button { flex: 1; border-right: 1px solid #7890a5; }
.window-controls .wide { flex: 2; border: 0; }
.window-controls svg { width: 14px; }
.tabs { display: flex; align-items: stretch; margin: 3px 1px 0 1px; padding: 0 2px 0 3px; border: 1px solid #484848; border-bottom: 0; border-radius: 3px 3px 0 0; background: linear-gradient(#858585 45%, #686868 55%, #777); }
.tabs a { padding: 0 13px; color: #f8f8f8; font: 600 11px/21px "Open Sans", sans-serif; text-decoration: none; white-space: nowrap; }
.tabs .active { color: #222; font-weight: normal; background: linear-gradient(#ededed, #bdbdbd); border: 1px solid #ddd; border-bottom: 0; border-radius: 3px 3px 0 0; padding: 0 8px; line-height: 20px; margin: 0 3px; }
.collapse { margin-left: 18px; }
.collapse svg { width: 13px; height: 7px; }
.help { width: 13px; height: 13px; margin: 4px 0 0 auto; border: 1px solid #444; background: #eee; color: #111; font-weight: bold; }

/* Ribbon */
.ribbon { flex: none; display: grid; grid-template-columns: 128fr 275fr 216fr 110fr 214fr; gap: 2px; padding: 1px 5px 5px 4px; background: linear-gradient(#6d6d6d, #707070 92%, #999); border-bottom: 1px solid #555; }
.panel { min-width: 0; display: flex; flex-direction: column; background: #f4f4f4; border: 1px solid #fff; border-radius: 2px; overflow: hidden; }
.panel h2 { position: relative; height: 16px; line-height: 17px; text-align: center; border-top: 1px solid #ddd; background: linear-gradient(#f5f5f5, #d9d9d9); color: #444; }
.palettes h2 { padding-right: 16px; }
.corner { position: absolute; right: 5px; bottom: 4px; width: 6px; height: 6px; }
.tools { display: flex; align-items: flex-start; justify-content: space-between; height: 73px; padding: 2px 3px 0; }
.big { flex-direction: column; justify-content: flex-start; position: relative; padding-top: 5px; min-width: 38px; height: 68px; color: #444; white-space: nowrap; font-size: 10px; line-height: 14px; }
.big svg { width: 28px; height: 28px; margin-bottom: 4px; }
.big.low { padding-top: 10px; }
.big.selected { width: 55px; height: 56px; border: 1px solid #5b98a4; background: linear-gradient(#cfe9ef, #d3edf2 45%, #8fd0da 50%, #b1e5e9); padding: 4px 0 0; }
.drop { padding-right: 12px; }
.drop::after { content: ""; position: absolute; right: 1px; bottom: 18px; border: 4px solid transparent; border-top: 5px solid #111; border-bottom: 0; }
.drop.side::after { bottom: 23px; }
.grid { display: grid; gap: 7px 0; padding-top: 10px; }
.three { grid-template-columns: repeat(3, 20px); }
.two { grid-template-columns: repeat(2, 20px); }
.one { grid-template-columns: 20px; }
.grid button { height: 20px; border: 1px solid #e0e0e0; }
.grid svg { width: 18px; height: 18px; }
.heavy { stroke-width: 2px; }
.grid .lit { background: #a8dce4; border-color: #6aa5ad; }
.stack { display: grid; gap: 6px; padding-top: 7px; width: 145px; }
.combo { position: relative; display: block; flex: 1; }
.combo select { width: 100%; height: 21px; padding: 0 14px 0 3px; appearance: none; border: 1px solid #888; border-radius: 3px; background: linear-gradient(#fafafa, #e0e0e0); color: #111; overflow: hidden; opacity: 1; }
.combo::after { content: ""; position: absolute; right: 5px; top: 8px; border: 4px solid transparent; border-top: 5px solid #222; border-bottom: 0; }
.disabled select { border-color: #aaa; background: #f2f2f2; }
.disabled::after { border-top-color: #aaa; }
.tiny { font: bold 8px "Liberation Mono", monospace; fill: #333; }
.letter { font: 24px "Open Sans", sans-serif; fill: #111; }

/* Drawing area */
.canvas { position: relative; flex: 1; min-height: 0; background: #fefff3; border-left: 2px solid #aaa; border-right: 2px solid #ccc; }
.drawing { width: 100%; height: 100%; }
.drawing path, .drawing circle, .drawing rect { fill: none; stroke-width: 1; }
.crisp { shape-rendering: crispEdges; }
.ink path, path.ink { stroke: #222; }
.red path, .red circle, .red rect, path.red { stroke: #d62450; }
.drawing .blue { stroke: #3434a8; }
.center { stroke: #c026c9; stroke-dasharray: 12 2 3 2; }
.green path { stroke: #4de04d; }
.green text { fill: #4de04d; font: 10px "Liberation Sans", sans-serif; }
.drawing .mag { fill: #e600e6; }
.dim { font: bold 6px "Liberation Sans", sans-serif; fill: #222; }
.caption { font: 8px "Liberation Sans", sans-serif; fill: #d01540; }
.plate { font: 9px "Liberation Sans", sans-serif; fill: #1a1a9c; text-anchor: middle; }
.std { fill: #35e035; }
.axis { font: 14px "Liberation Sans", sans-serif; fill: #444; }
.doc-controls { position: absolute; top: 8px; right: 9px; display: flex; gap: 6px; }
.doc-controls svg { width: 12px; height: 12px; }

/* Command line */
.command { flex: none; display: grid; grid-template-columns: 14px 1fr 14px; border-top: 3px solid #777; background: #fff; font: 12px/15px "Liberation Mono", monospace; color: #333; }
.grip { grid-row: 1 / 3; background: #aaa; border-top: 1px solid #888; }
.grip::before { content: ""; display: block; height: 4px; margin: 3px 1px; border: dashed #555; border-width: 1px 0; }
.history { padding: 2px 2px 0; border-bottom: 1px solid #aaa; height: 47px; }
.vscroll { display: flex; flex-direction: column; justify-content: space-between; align-items: center; padding: 9px 0 5px; background: #f4f4f4; border-bottom: 1px solid #aaa; }
.vscroll svg { width: 6px; height: 4px; }
.prompt { grid-column: 2 / 4; display: flex; gap: 7px; padding: 0 2px; height: 17px; line-height: 18px; }
.prompt input { flex: 1; min-width: 0; }

/* Status bar */
.status { flex: none; display: flex; height: 21px; border-top: 1px solid #333; background: linear-gradient(#8b8b8b, #a5a5a5); }
.coords { width: 168px; padding-left: 12px; font: 10px/21px "Liberation Sans", sans-serif; color: #111; border-right: 1px solid #666; background: linear-gradient(#a8a8a8, #8c8c8c); }
.group { display: flex; margin-right: 12px; }
.group button { width: 20px; height: 19px; border: 1px solid #ddd; border-right-color: #777; background: linear-gradient(#d8d8d8, #b2b2b2); }
.group svg { width: 18px; height: 18px; }
.group .on { background: #bdeef5; border-color: #8ac6cf; }
.group .scale { width: 48px; gap: 2px; }
.group .tri { width: 8px; height: 6px; }
.group .plain { width: 18px; background: none; border: 0; }
.group.last { margin-right: 0; }
.spacer { flex: 1; }

/* Properties palette */
.palette { position: absolute; left: 270px; top: 119px; width: 267px; height: 500px; display: flex; padding: 2px; border: 1px solid #555; border-radius: 3px; background: #c7c7c9; }
.rail { width: 18px; display: flex; flex-direction: column; align-items: center; gap: 6px; padding: 2px 0; }
.rail button, .rail button svg { width: 12px; height: 12px; }
.name { margin-top: auto; writing-mode: vertical-rl; transform: rotate(180deg); line-height: 14px; }
.mini { width: 12px; height: 14px; }
.sheet { flex: 1; min-width: 0; display: flex; flex-direction: column; padding: 11px 0 0 2px; border: 1px solid #777; border-radius: 3px; background: #f0f0f1; }
.chooser { display: flex; gap: 4px; padding: 0 11px 0 17px; height: 27px; }
.chooser .combo select { height: 22px; }
.pick { display: flex; border: 1px solid #aaa; height: 22px; }
.pick button { width: 23px; border-right: 1px solid #bbb; }
.pick svg { width: 18px; height: 18px; }
.scroller { flex: 1; min-height: 0; display: flex; overflow: hidden; gap: 7px; padding-right: 12px; }
.bar { width: 9px; background: linear-gradient(#bdbdc1 87%, #eee 87%); border: 1px solid #ccc; border-bottom-color: #999; }
.groups { flex: 1; min-width: 0; }
.groups section { margin-bottom: 2px; }
.groups h3 { position: relative; height: 18px; padding-left: 4px; font-weight: 600; line-height: 17px; background: linear-gradient(#bbb, #a2a2a2); border: 1px solid #aaa; }
.groups h3::after { content: ""; position: absolute; right: 6px; top: 6px; border: 4px solid transparent; border-bottom: 4px solid #111; border-top: 0; }
.groups table { width: calc(100% - 15px); margin-left: 15px; border-collapse: collapse; table-layout: fixed; }
.groups tr { height: 18px; }
.groups th, .groups td { height: 18px; padding: 0 0 0 3px; border: 1px solid #aaa; border-top: 0; line-height: 17px; text-align: left; font-weight: normal; white-space: nowrap; }
.groups th { width: 90px; background: #f0f0f1; }
.groups td { background: #fff; padding-left: 1px; }
.groups .ro { background: #f3f3f4; }
.groups input { display: block; width: 100%; height: 17px; }
.swatch { display: inline-block; width: 9px; height: 9px; margin: 0 6px 0 1px; background: #000; vertical-align: -1px; }
.rule { display: inline-block; width: 43px; height: 1px; margin: 0 5px 0 3px; background: #111; vertical-align: 4px; }
.tip { position: absolute; left: 144px; top: 208px; height: 18px; padding: 0 1px; border: 1px solid #777; background: #f5f5f8; line-height: 16px; white-space: nowrap; }
.cursor { position: absolute; left: 150px; top: 217px; width: 12px; height: 18px; }

.watermark { position: absolute; right: 13px; bottom: 16px; width: 82px; height: 78px; border: 1px solid #ddd; background: rgba(245, 245, 245, .6); opacity: .9; }
.watermark svg { width: 80px; height: 76px; }
.watermark span { position: absolute; left: 4px; bottom: -2px; color: #999; font: 15px/18px "Open Sans", sans-serif; }
```
